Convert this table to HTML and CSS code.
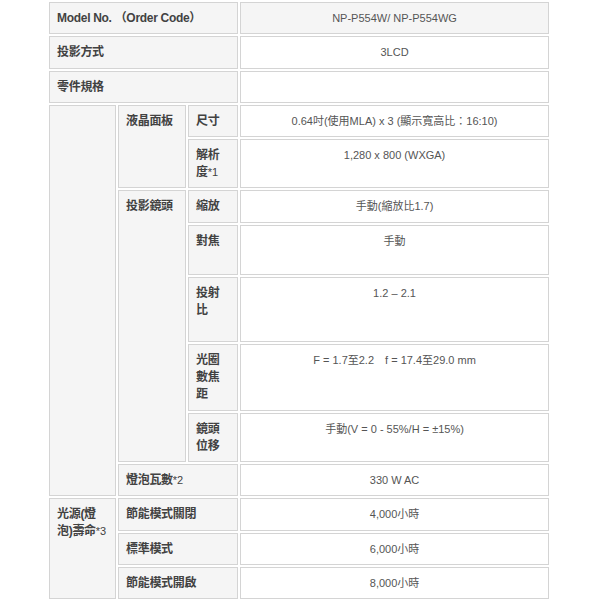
FILE: index.html
```html
<!DOCTYPE html>
<html lang="zh-Hant">
<head>
<meta charset="utf-8">
<title>NP-P554W 規格</title>
<link rel="stylesheet" href="styles.css">
</head>
<body>
<table class="spec">
  <colgroup>
    <col class="c1"><col class="c2"><col class="c3"><col class="c4">
  </colgroup>
  <tbody>
    <tr class="h32 head">
      <th colspan="3">Model No. （Order Code）</th>
      <td>NP-P554W/ NP-P554WG</td>
    </tr>
    <tr class="h33">
      <th colspan="3">投影方式</th>
      <td>3LCD</td>
    </tr>
    <tr class="h32">
      <th colspan="3">零件規格</th>
      <td></td>
    </tr>
    <tr class="h32">
      <th rowspan="8"></th>
      <th rowspan="2">液晶面板</th>
      <th>尺寸</th>
      <td>0.64吋(使用MLA) x 3 (顯示寬高比：16:10)</td>
    </tr>
    <tr class="h49">
      <th>解析<br>度<span class="note">*1</span></th>
      <td>1,280 x 800 (WXGA)</td>
    </tr>
    <tr class="h33">
      <th rowspan="5">投影鏡頭</th>
      <th>縮放</th>
      <td>手動(縮放比1.7)</td>
    </tr>
    <tr class="h50">
      <th>對焦</th>
      <td>手動</td>
    </tr>
    <tr class="h65">
      <th>投射<br>比</th>
      <td>1.2 – 2.1</td>
    </tr>
    <tr class="h67">
      <th>光圈<br>數焦<br>距</th>
      <td>F = 1.7至2.2　f = 17.4至29.0 mm</td>
    </tr>
    <tr class="h49">
      <th>鏡頭<br>位移</th>
      <td>手動(V = 0 - 55%/H = ±15%)</td>
    </tr>
    <tr class="h32">
      <th colspan="2">燈泡瓦數<span class="note">*2</span></th>
      <td>330 W AC</td>
    </tr>
    <tr class="h33">
      <th rowspan="3" class="nowrap">光源(燈<br>泡)壽命<span class="note">*3</span></th>
      <th colspan="2">節能模式關閉</th>
      <td>4,000小時</td>
    </tr>
    <tr class="h32">
      <th colspan="2">標準模式</th>
      <td>6,000小時</td>
    </tr>
    <tr class="h32">
      <th colspan="2">節能模式開啟</th>
      <td>8,000小時</td>
    </tr>
  </tbody>
</table>
</body>
</html>
```

FILE: styles.css
```css
html, body {
  margin: 0;
  padding: 0;
  background: #ffffff;
}

.spec {
  margin: 0 0 0 47px;
  table-layout: fixed;
  width: 504px;
  border-collapse: separate;
  border-spacing: 2px;
  font-family: "Liberation Sans", "Noto Sans CJK TC", sans-serif;
}

.c1 { width: 67px; }
.c2 { width: 68px; }
.c3 { width: 50px; }
.c4 { width: 309px; }

.spec th,
.spec td {
  border: 1px solid #d4d4d4;
  vertical-align: top;
  line-height: 17px;
  padding: 7px 7px 6px 7px;
}

.spec th {
  background: #f5f5f5;
  color: #424242;
  font-size: 12px;
  font-weight: bold;
  text-align: left;
  letter-spacing: -0.3px;
}

.spec td {
  background: #ffffff;
  color: #555555;
  font-size: 11px;
  text-align: center;
}

.spec .head td {
  background: #f5f5f5;
}

.note {
  font-weight: normal;
  font-size: 11px;
  letter-spacing: 0;
}

.nowrap {
  white-space: nowrap;
}

.h32 { height: 32px; }
.h33 { height: 33px; }
.h49 { height: 49px; }
.h50 { height: 50px; }
.h65 { height: 65px; }
.h67 { height: 67px; }
```
